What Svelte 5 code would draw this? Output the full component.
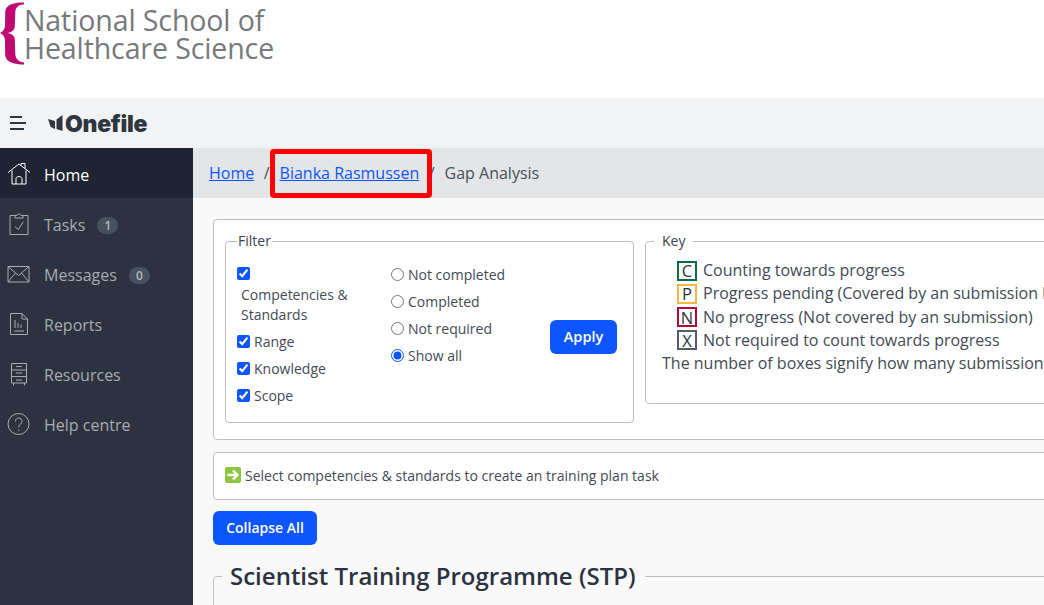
<script>
  const nav = [
    { label: 'Home', icon: 'home', active: true },
    { label: 'Tasks', icon: 'tasks', badge: 1 },
    { label: 'Messages', icon: 'mail', badge: 0 },
    { label: 'Reports', icon: 'report' },
    { label: 'Resources', icon: 'cabinet' },
    { label: 'Help centre', icon: 'help' }
  ];
  const radios = ['Not completed', 'Completed', 'Not required', 'Show all'];
  const key = [
    { l: 'C', c: 'green', t: 'Counting towards progress' },
    { l: 'P', c: 'amber', t: 'Progress pending (Covered by an submission but not yet signed off)' },
    { l: 'N', c: 'red', t: 'No progress (Not covered by an submission)' },
    { l: 'X', c: 'grey', t: 'Not required to count towards progress' }
  ];
</script>

<div class="page">
  <header class="brand">
    <svg class="brace" viewBox="0 0 26 66" width="26" height="66" aria-hidden="true">
      <path d="M24 2.500C15 2.500 5.500 4 5.200 12L5 26C4.800 29.500 3 31.500 0 33C3 34.500 4.800 36.500 5 40L5.200 55C5.500 62.500 15 64.500 24 64.500L24 62.500C19 62 15.500 59 15.300 54L14.800 39C14.600 36 12 34 8 33C12 32 14.600 30 14.800 27L15.300 12C15.500 7 19 4.500 24 4.500Z" fill="#bf0a73"/>
    </svg>
    <div class="brand-name">National School of<br />Healthcare Science</div>
  </header>

  <div class="topbar">
    <span class="burger"><i></i><i></i><i></i></span>
    <svg class="book" viewBox="0 0 15 17" width="15" height="17" aria-hidden="true">
      <path d="M0 4L7 6V14L2.700 12ZM8.500 4.500L14.500 0V16L8.500 14Z" fill="#2f3640"/>
    </svg>
    <span class="onefile">Onefile</span>
  </div>

  <div class="body">
    <nav class="side">
      {#each nav as n}
        <a class="nav-item" class:active={n.active} href="#top">
          <svg class="nav-icon" viewBox="0 0 24 24" width="24" height="24" fill="none" stroke="currentColor" stroke-width="1" aria-hidden="true">
            {#if n.icon === 'home'}
              <path d="M1 9.500L12 1L23 9.500M14 2.500V.5H18V5.500M5 7.500V21H19V7.500M9 21V15.500C9 13 15 13 15 15.500V21"/>
            {:else if n.icon === 'tasks'}
              <path d="M8 2.500H3V21.500H21V2.500H16M8 5V2.500H10C10 .5 14 .5 14 2.500H16V5ZM8 13.700L11.300 16.500L16.300 8.700"/>
            {:else if n.icon === 'mail'}
              <path d="M1 3.500H22V19H1ZM1 3.500L11.500 12.500L22 3.500M1 19L8.500 10M22 19L14.500 10"/>
            {:else if n.icon === 'report'}
              <path d="M3.500 .5H15L20.500 6V21.500H3.500ZM15 .5V6H20.500M8 15V7M11 15V10M14 15V11.500M7 18H17"/>
            {:else if n.icon === 'cabinet'}
              <path d="M4.500 .5H19.500V20H4.500ZM4.500 7H19.500M4.500 13.500H19.500M9 3.500H15M9 10H15M9 17H15M6.500 20V22.500M17.500 20V22.500"/>
            {:else}
              <circle cx="11.500" cy="11" r="10.500"/>
              <path d="M8.500 8.500C8.500 6 10 5 11.700 5C13.500 5 15 6.500 15 8.300C15 11 11.700 11 11.700 14.500M11.700 16.500V18"/>
            {/if}
          </svg>
          <span>{n.label}</span>
          {#if n.badge !== undefined}<span class="badge">{n.badge}</span>{/if}
        </a>
      {/each}
    </nav>

    <main class="main">
      <div class="crumbs">
        <a href="#top">Home</a>
        <span class="sep">/</span>
        <a href="#top">Bianka Rasmussen</a>
        <span class="sep">/</span>
        <span>Gap Analysis</span>
        <div class="highlight"></div>
      </div>

      <div class="content">
        <section class="panel top-panel">
          <fieldset class="filter">
            <legend>Filter</legend>
            <div class="filter-grid">
              <div class="checks">
                <label class="stack"><input type="checkbox" checked /><span>Competencies &amp; Standards</span></label>
                <label><input type="checkbox" checked />Range</label>
                <label><input type="checkbox" checked />Knowledge</label>
                <label><input type="checkbox" checked />Scope</label>
              </div>
              <div class="radios">
                {#each radios as r}
                  <label><input type="radio" name="state" checked={r === 'Show all'} />{r}</label>
                {/each}
              </div>
              <button class="btn apply">Apply</button>
            </div>
          </fieldset>

          <fieldset class="key">
            <legend>Key</legend>
            <ul>
              {#each key as k}
                <li><span class="box {k.c}">{k.l}</span>{k.t}</li>
              {/each}
            </ul>
            <p>The number of boxes signify how many submissions are required to count towards progress</p>
          </fieldset>
        </section>

        <section class="panel select">
          <svg viewBox="0 0 16 16" width="16" height="16" aria-hidden="true">
            <rect width="16" height="16" rx="2" fill="#8cc63f"/>
            <path d="M2.500 8H12M8 3.500L12.500 8L8 12.500" fill="none" stroke="#fff" stroke-width="2.400"/>
          </svg>
          <span>Select competencies &amp; standards to create an training plan task</span>
        </section>

        <button class="btn collapse">Collapse All</button>

        <fieldset class="stp">
          <legend>Scientist Training Programme (STP)</legend>
        </fieldset>
      </div>
    </main>
  </div>
</div>

<style>
  :global(body) {
    margin: 0;
    overflow: hidden;
    background: #fff;
  }
  .page {
    width: 1044px;
    height: 605px;
    overflow: hidden;
    font-family: "Open Sans", "Noto Sans", sans-serif;
    color: #444a55;
    display: flex;
    flex-direction: column;
  }
  .brand {
    height: 98px;
    flex: none;
    display: flex;
    align-items: flex-start;
    background: #fff;
    box-sizing: border-box;
  }
  .brace {
    flex: none;
  }
  .brand-name {
    font-family: "Open Sans", sans-serif;
    font-weight: 400;
    font-size: 28.500px;
    line-height: 28px;
    letter-spacing: -0.1px;
    color: #77797b;
    margin-top: 6px;
    margin-left: -2px;
    white-space: nowrap;
  }
  .topbar {
    height: 50px;
    flex: none;
    background: #f2f3f5;
    display: flex;
    align-items: center;
    padding-left: 10px;
    box-sizing: border-box;
  }
  .burger {
    width: 16px;
    display: flex;
    flex-direction: column;
    gap: 4px;
    margin-right: 22px;
  }
  .burger i {
    display: block;
    height: 2px;
    background: #2f3640;
    width: 16px;
  }
  .burger i:first-child { width: 12px; }
  .burger i:last-child { width: 14px; }
  .book { margin-right: 2px; }
  .onefile {
    font-family: "Inter", sans-serif;
    font-weight: 900;
    font-size: 23px;
    letter-spacing: -0.3px;
    color: #2f3640;
    line-height: 1;
    padding-top: 2px;
  }
  .body {
    flex: 1;
    display: flex;
    min-height: 0;
  }
  .side {
    width: 193px;
    flex: none;
    background: #2c3240;
  }
  .nav-item {
    height: 50px;
    display: flex;
    align-items: center;
    padding: 4px 0 0 7px;
    gap: 13px;
    color: #a8abb2;
    font-size: 16px;
    text-decoration: none;
    box-sizing: border-box;
  }
  .nav-item.active {
    background: #1f2433;
    color: #fff;
  }
  .nav-icon { flex: none; }
  .badge {
    background: #475160;
    color: #b4b8be;
    font-size: 12px;
    line-height: 17px;
    height: 17px;
    width: 21px;
    border-radius: 9px;
    text-align: center;
    margin-left: -1px;
    font-weight: 600;
  }
  .main {
    flex: 1;
    min-width: 0;
    background: #f9f9f9;
    overflow: hidden;
  }
  .crumbs {
    position: relative;
    height: 50px;
    background: #e4e5e7;
    display: flex;
    align-items: center;
    padding-left: 16px;
    font-size: 16px;
    white-space: nowrap;
    color: #4b5059;
  }
  .crumbs a { color: #0d55ff; }
  .sep { margin: 0 10px 0 9.500px; }
  .highlight {
    position: absolute;
    left: 77px;
    top: 1px;
    width: 162px;
    height: 49px;
    border: 5px solid #fe0000;
    border-radius: 4px;
    box-sizing: border-box;
  }
  .content {
    padding: 21px 0 0 20px;
    width: 1100px;
    box-sizing: border-box;
  }
  .panel {
    background: #fff;
    border: 1px solid #bdbdbd;
    border-radius: 4px;
    box-sizing: border-box;
  }
  .top-panel {
    height: 221px;
    display: flex;
    align-items: flex-start;
    padding: 11px 0 0 11px;
    gap: 11px;
  }
  fieldset {
    margin: 0;
    border: 1px solid #bdbdbd;
    border-radius: 4px;
    box-sizing: border-box;
    min-width: 0;
  }
  legend {
    color: #3d434d;
    font-size: 14px;
    line-height: 20px;
    font-weight: 500;
  }
  .filter {
    width: 409px;
    height: 192px;
    padding: 0 0 0 11px;
    flex: none;
  }
  .filter legend {
    padding: 0 1px;
    margin-left: 0;
  }
  .filter-grid {
    display: flex;
    align-items: flex-start;
    padding-top: 10px;
    font-size: 14px;
    color: #444a55;
  }
  .checks {
    width: 154px;
    flex: none;
    display: flex;
    flex-direction: column;
    padding-top: 6px;
  }
  .checks label {
    display: flex;
    align-items: center;
    height: 27px;
    line-height: 20px;
  }
  .checks label.stack {
    display: block;
    height: auto;
    padding-bottom: 3px;
  }
  .stack input {
    display: block;
    margin: 0 0 5px 0;
  }
  .stack span {
    display: block;
    padding-left: 4px;
    width: 120px;
    box-sizing: border-box;
  }
  input {
    width: 13px;
    height: 13px;
    accent-color: #0d55ff;
    margin: 0 4px 0 0;
    flex: none;
  }
  .radios {
    width: 159px;
    flex: none;
    display: flex;
    flex-direction: column;
  }
  .radios label {
    display: flex;
    align-items: center;
    height: 27px;
  }
  .btn {
    background: #0d55ff;
    color: #fff;
    border: 0;
    border-radius: 6px;
    font-family: inherit;
    font-weight: 600;
    font-size: 14px;
    padding: 0 0 2px;
  }
  .apply {
    width: 67px;
    height: 34px;
    margin-top: 59px;
    font-size: 14.500px;
    padding-bottom: 1px;
  }
  .key {
    width: 700px;
    height: 173px;
    padding: 0 0 0 16px;
    flex: none;
  }
  .key legend {
    padding: 0 8px;
    margin-left: -8px;
  }
  .key ul {
    list-style: none;
    margin: 8px 0 0;
    padding: 0 0 0 15px;
    font-size: 16px;
    line-height: 23px;
  }
  .key li {
    display: flex;
    align-items: center;
    height: 23.250px;
    white-space: nowrap;
  }
  .box {
    width: 20px;
    height: 20px;
    box-sizing: border-box;
    border: 2px solid;
    margin-right: 6px;
    display: flex;
    align-items: center;
    justify-content: center;
    font-size: 16.500px;
    color: #2c3240;
    flex: none;
  }
  .green { border-color: #0b6b43; }
  .amber { border-color: #f5b942; }
  .red { border-color: #b5082e; }
  .grey { border-color: #565b67; }
  .key p {
    margin: 0;
    font-size: 16px;
    line-height: 23px;
    white-space: nowrap;
  }
  .select {
    margin-top: 12px;
    height: 48px;
    display: flex;
    align-items: center;
    gap: 4px;
    padding: 0 0 2px 11px;
    font-size: 14px;
  }
  .collapse {
    display: block;
    margin-top: 11px;
    width: 104px;
    height: 34px;
  }
  .stp {
    margin-top: 13px;
    height: 120px;
    padding: 0 0 0 8px;
  }
  .stp legend {
    font-size: 24px;
    line-height: 36px;
    font-weight: 600;
    padding: 0 9px 0 8px;
    color: #2c3240;
  }
</style>
